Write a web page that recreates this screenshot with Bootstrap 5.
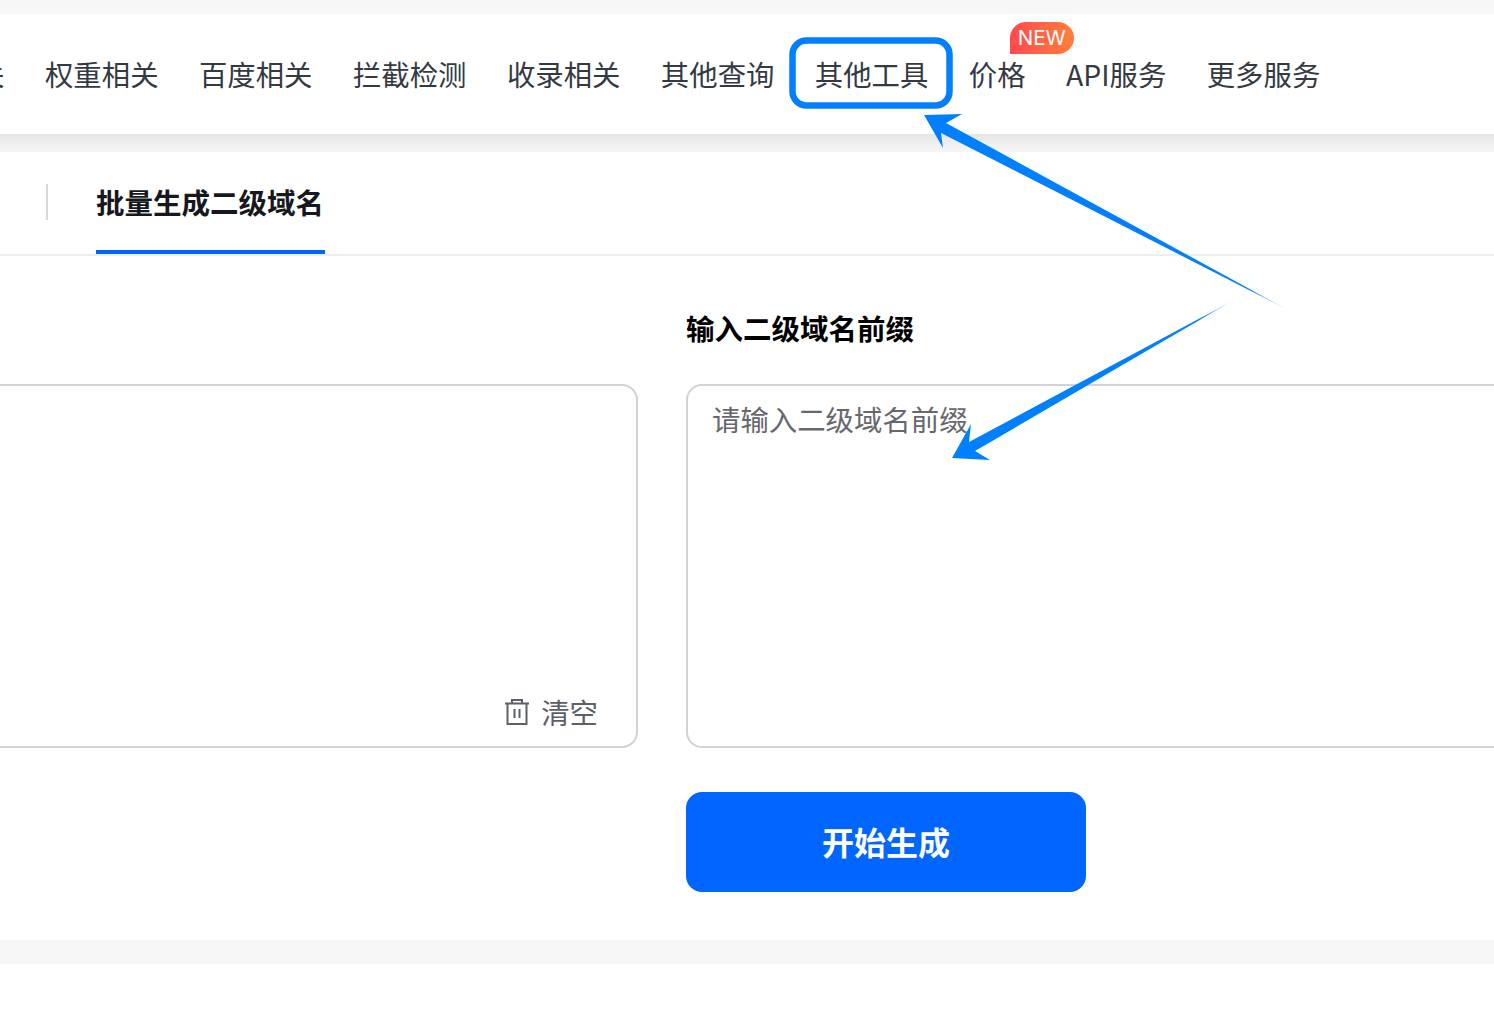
<!DOCTYPE html>
<html lang="zh">
<head>
<meta charset="utf-8">
<title>批量生成二级域名</title>
<link href="https://cdn.jsdelivr.net/npm/bootstrap@5.3.0/dist/css/bootstrap.min.css" rel="stylesheet">
<style>
html,body{height:1012px;overflow:hidden;background:#fff;}
body{font-family:"Noto Sans CJK SC","Noto Sans",sans-serif;position:relative;width:1494px;}
.page-top{height:14px;background:#f7f7f7;}
.site-head{height:120px;background:#fff;position:relative;}
.site-nav{gap:40.4px;font-size:28.4px;color:#343a44;margin-left:-109px;line-height:40px;height:120px;white-space:nowrap;}
.site-nav a{color:inherit;text-decoration:none;position:relative;}
.new-tag{position:absolute;left:41px;top:-32px;width:64px;height:32px;border-radius:16px 16px 16px 0;background:linear-gradient(90deg,#ff4a4f,#ff7f3a);color:#fff;font:400 20.500px/32px "Inter",sans-serif;text-align:center;}
.head-gap{height:18px;background:linear-gradient(#e6e6e6,#f7f7f7);}
.work-panel{height:788px;background:#fff;}
.tab-bar{height:104px;border-bottom:2px solid #eee;padding-left:46px;}
.tab-rule{width:2px;height:36px;background:#d8d8d8;margin-top:32px;}
.tab-on{margin-left:48px;width:229px;height:102px;border-bottom:4px solid #0066ff;font-size:28.500px;font-weight:700;color:#16181d;line-height:40px;padding-top:30px;white-space:nowrap;}
.form-area{padding-top:52px;gap:48px;margin-left:-30px;}
.form-col-a{width:668px;flex:none;padding-top:76px;}
.form-col-b{width:900px;flex:none;}
.field-title{height:76px;font-size:28.500px;font-weight:700;color:#000;line-height:40px;white-space:nowrap;}
.text-box{height:364px;border:2px solid #d2d2d2;border-radius:16px;background:#fff;padding:13px 24px;font-size:28.400px;line-height:40px;color:#66686d;}
.text-box-a{position:relative;}
.clear-link{position:absolute;right:38px;bottom:14px;color:#5b6069;font-size:28.400px;line-height:40px;gap:12px;}
.start-btn{width:400px;height:100px;margin-top:44px;padding-bottom:8px;border-radius:16px;background:#0066ff;border:0;color:#fff;font-size:32px;font-weight:700;}
.start-btn:hover{background:#0066ff;color:#fff;}
.page-bottom{height:24px;background:#f7f7f7;}
.note-layer{position:absolute;left:0;top:0;pointer-events:none;}
</style>
</head>
<body>
<div class="page-top"></div>
<header class="site-head">
  <nav class="site-nav d-flex align-items-center">
    <a href="#">站长相关</a>
    <a href="#">权重相关</a>
    <a href="#">百度相关</a>
    <a href="#">拦截检测</a>
    <a href="#">收录相关</a>
    <a href="#">其他查询</a>
    <a href="#">其他工具</a>
    <a href="#">价格<span class="new-tag">NEW</span></a>
    <a href="#">API服务</a>
    <a href="#">更多服务</a>
  </nav>
</header>
<div class="head-gap"></div>
<main class="work-panel">
  <div class="tab-bar d-flex">
    <div class="tab-rule"></div>
    <div class="tab-on">批量生成二级域名</div>
  </div>
  <div class="form-area d-flex">
    <div class="form-col-a">
      <div class="text-box text-box-a">
        <div class="clear-link d-flex align-items-center">
          <svg width="24" height="28" viewBox="0 0 24 28" fill="none" stroke="#5b6069" stroke-width="2"><path d="M0 5.500h24M2.500 5.500V26h19V5.500M7 5V2h10v3M9.500 11v9M14.500 11v9"/></svg>
          <span>清空</span>
        </div>
      </div>
    </div>
    <div class="form-col-b">
      <div class="field-title">输入二级域名前缀</div>
      <div class="text-box">请输入二级域名前缀</div>
      <button type="button" class="btn start-btn">开始生成</button>
    </div>
  </div>
</main>
<div class="page-bottom"></div>
<svg class="note-layer" width="1494" height="1012" viewBox="0 0 1494 1012">
  <defs>
    <linearGradient id="fadeA" gradientUnits="userSpaceOnUse" x1="1290" y1="311" x2="1180" y2="251"><stop offset="0" stop-color="#0080ff" stop-opacity="0"/><stop offset=".35" stop-color="#0080ff"/></linearGradient>
    <linearGradient id="fadeB" gradientUnits="userSpaceOnUse" x1="1234" y1="300" x2="1150" y2="348"><stop offset="0" stop-color="#0080ff" stop-opacity="0"/><stop offset=".4" stop-color="#0080ff"/></linearGradient>
  </defs>
  <rect x="792.500" y="40.500" width="157" height="65" rx="14" fill="none" stroke="#0080ff" stroke-width="6.500"/>
  <path d="M924 115L962 114L946 123L1290 311L941 133L943 148Z" fill="url(#fadeA)"/>
  <path d="M952 458L971 424L969 442L1234 300L975 451L990 460Z" fill="url(#fadeB)"/>
</svg>
<script src="https://cdn.jsdelivr.net/npm/bootstrap@5.3.0/dist/js/bootstrap.bundle.min.js"></script>
</body>
</html>
